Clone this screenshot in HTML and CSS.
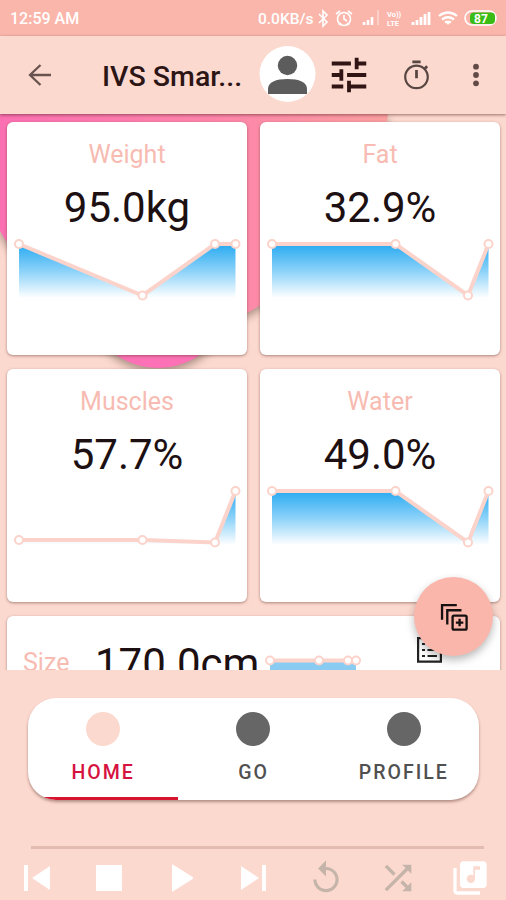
FILE: index.html
```html
<!DOCTYPE html>
<html lang="en">
<head>
<meta charset="utf-8">
<title>IVS Smart</title>
<link rel="stylesheet" href="styles.css">
</head>
<body>
<div class="app">
  <header class="status">
    <span class="clock">12:59 AM</span>
    <span class="speed">0.0KB/s</span>
    <svg class="status-icons" width="186" height="36" viewBox="0 0 186 36" fill="none" stroke="#fff" stroke-width="1.6">
      <path d="M3 14l8 8-4 4V11l4 4-8 8"/>
      <circle cx="28" cy="19" r="6.500"/><path d="M28 15v4l3 2M20 14l4-3M36 14l-4-3M23 25l2-2M33 25l-2-2"/>
      <path stroke-width="2.6" d="M48 25v-3M52 25v-5M56 25v-8"/><path stroke-width="2" opacity=".35" d="M62 25V10"/>
      <path stroke-width="2.8" d="M97 25v-3M101 25v-5M105 25v-8M109 25V14M113 25V12"/>
      <path stroke-width="2.200" d="M123 16q9-7 18 0M126 19.500q6-4.500 12 0M129 22.500q3-2 6 0"/><path d="M129.500 22h5L132 25z" fill="#fff" stroke="none"/>
      <rect x="149" y="11" width="31" height="14" rx="7"/><rect x="154" y="12.500" width="25" height="11.500" rx="4" fill="#39bd16" stroke="none"/>
      <text class="lte" x="71" y="17">Vo))</text><text class="lte" x="71" y="25.500">LTE</text>
      <text class="battery" x="158" y="22.500">87</text>
    </svg>
  </header>
  <nav class="bar">
    <svg class="back" width="24" height="24" viewBox="0 0 24 24" fill="none" stroke="#69534e" stroke-width="2.300"><path d="M23 12H2M12.500 2L2 12l10.500 10"/></svg>
    <h1 class="title">IVS Smar...</h1>
    <svg class="avatar" width="58" height="58" viewBox="0 0 58 58"><circle cx="28.500" cy="28" r="28" fill="#fff"/><circle cx="28.500" cy="19.500" r="9.700" fill="#5c5c5c"/><path d="M9 48v-5c0-7 8-10 19.500-10s19.500 3 19.500 10v5z" fill="#5c5c5c"/></svg>
    <svg class="tune" width="46" height="46" viewBox="0 0 24 24" fill="#301514"><path d="M3 17v2h6v-2H3zM3 5v2h10V5H3zm10 16v-2h8v-2h-8v-2h-2v6h2zM7 9v2H3v2h4v2h2V9H7zm14 4v-2H11v2h10zm-6-4h2V7h4V5h-4V3h-2v6z"/></svg>
    <svg class="timer" width="33" height="33" viewBox="0 0 24 24" fill="#574641"><path d="M15 1H9v2h6V1zm-4 13h2V8h-2v6zm8.030-6.610l1.420-1.420c-.43-.51-.9-.99-1.410-1.410l-1.420 1.420C16.070 4.740 14.120 4 12 4c-4.970 0-9 4.030-9 9s4.020 9 9 9 9-4.030 9-9c0-2.120-.74-4.070-1.970-5.610zM12 20.400c-4.100 0-7.400-3.300-7.400-7.400S7.900 5.600 12 5.600s7.400 3.300 7.400 7.400-3.300 7.400-7.400 7.400z"/></svg>
    <svg class="more" width="8" height="24" viewBox="0 0 8 24" fill="#624b47"><circle cx="4" cy="3.700" r="2.900"/><circle cx="4" cy="12" r="2.900"/><circle cx="4" cy="20.300" r="2.900"/></svg>
  </nav>
  <main class="content">
    <svg class="backdrop" width="506" height="556" viewBox="0 0 506 556">
      <defs>
        <linearGradient id="pink" x1="0" x2="1"><stop offset="0" stop-color="#fb70b2"/><stop offset=".6" stop-color="#fd87a9"/><stop offset="1" stop-color="#fa9fa0"/></linearGradient>
        <linearGradient id="blue" gradientUnits="userSpaceOnUse" x1="0" x2="0" y1="8" y2="62"><stop offset="0" stop-color="#29aaf1"/><stop offset=".5" stop-color="#8bd2f9"/><stop offset="1" stop-color="#fff"/></linearGradient>
      </defs>
      <g class="blobs"><circle cx="158" cy="180" r="74" fill="#fd72b6"/><path d="M0 0H388Q380 70 335 130Q300 170 247 199Q140 225 60 175Q15 145 0 117z" fill="url(#pink)"/></g>
    </svg>
    <section class="cards">
      <article class="card"><h2>Weight</h2><p>95.0kg</p>
        <svg class="chart" width="240" height="70" viewBox="0 0 240 70"><path class="area" d="M12 8L135.500 59.500L208 8H228.500V62H12z"/><path class="line" d="M12 8L135.500 59.500L208 8H228.500"/><g class="dots"><circle cx="12" cy="8" r="4"/><circle cx="135.500" cy="59.500" r="4"/><circle cx="208" cy="8" r="4"/><circle cx="228.500" cy="8" r="4"/></g></svg></article>
      <article class="card"><h2>Fat</h2><p>32.9%</p>
        <svg class="chart" width="240" height="70" viewBox="0 0 240 70"><path class="area" d="M12 8H135.500L208 59.500L228.500 8V62H12z"/><path class="line" d="M12 8H135.500L208 59.500L228.500 8"/><g class="dots"><circle cx="12" cy="8" r="4"/><circle cx="135.500" cy="8" r="4"/><circle cx="208" cy="59.500" r="4"/><circle cx="228.500" cy="8" r="4"/></g></svg></article>
      <article class="card"><h2>Muscles</h2><p>57.7%</p>
        <svg class="chart" width="240" height="70" viewBox="0 0 240 70"><path class="area" d="M12 57H135.500L208 59.500L228.500 8V62H12z"/><path class="line" d="M12 57H135.500L208 59.500L228.500 8"/><g class="dots"><circle cx="12" cy="57" r="4"/><circle cx="135.500" cy="57" r="4"/><circle cx="208" cy="59.500" r="4"/><circle cx="228.500" cy="8" r="4"/></g></svg></article>
      <article class="card"><h2>Water</h2><p>49.0%</p>
        <svg class="chart" width="240" height="70" viewBox="0 0 240 70"><path class="area" d="M12 8H135.500L208 59.500L228.500 8V62H12z"/><path class="line" d="M12 8H135.500L208 59.500L228.500 8"/><g class="dots"><circle cx="12" cy="8" r="4"/><circle cx="135.500" cy="8" r="4"/><circle cx="208" cy="59.500" r="4"/><circle cx="228.500" cy="8" r="4"/></g></svg></article>
      <article class="card wide"><h2>Size</h2><p>170.0cm</p>
        <svg class="mini" width="100" height="40" viewBox="0 0 100 40"><path d="M7 8H93V40H7z" fill="#8acbf2"/><path class="line" d="M7 7.500H93"/><g class="dots"><circle cx="7" cy="7.500" r="4"/><circle cx="56" cy="7.500" r="4"/><circle cx="85" cy="7.500" r="4"/><circle cx="93" cy="7.500" r="4"/></g></svg>
        <svg class="list" width="25" height="26" viewBox="0 0 25 26" fill="none" stroke="#222" stroke-width="2.200"><path d="M1.100 1.100h22.800v23.600H1.100z"/><path d="M5 7h3M10.500 7h9.500M5 13h3M10.500 13h9.500M5 19h3M10.500 19h9.500"/></svg>
      </article>
    </section>
    <button class="fab" aria-label="Add"><svg width="28" height="28" viewBox="0 0 30 30" fill="none" stroke="#171010" stroke-width="2.500"><path d="M2.200 18V2.200H18M7.800 23V7.800H23"/><rect x="13.500" y="13.500" width="15" height="15" rx="1.500"/><path d="M21 17v8M17 21h8"/></svg></button>
  </main>
  <footer class="bottom">
    <div class="tabs">
      <div class="tab active"><i></i><span>HOME</span></div>
      <div class="tab"><i></i><span>GO</span></div>
      <div class="tab"><i></i><span>PROFILE</span></div>
    </div>
    <div class="seek"></div>
    <div class="player">
      <svg width="28" height="28" viewBox="0 0 28 28"><path d="M1 1h4v26H1zM27 2v24L9 14z"/></svg>
      <svg width="26" height="26" viewBox="0 0 26 26"><path d="M0 0h26v26H0z"/></svg>
      <svg width="24" height="30" viewBox="0 0 24 30"><path d="M3 1v28L25 15z"/></svg>
      <svg width="28" height="28" viewBox="0 0 28 28"><path d="M22 1h4v26h-4zM1 2v24L19 14z"/></svg>
      <svg class="muted" width="40" height="38" viewBox="0 0 24 24"><path d="M12 5V1L7 6l5 5V7c3.310 0 6 2.690 6 6s-2.690 6-6 6-6-2.690-6-6H4c0 4.420 3.580 8 8 8s8-3.580 8-8-3.580-8-8-8z"/></svg>
      <svg class="muted" width="40" height="40" viewBox="0 0 24 24"><path d="M10.590 9.170L5.410 4 4 5.410l5.170 5.170 1.420-1.410zM14.500 4l2.040 2.040L4 18.590 5.410 20 17.960 7.460 20 9.500V4h-5.500zm.33 9.410l-1.410 1.410 3.130 3.130L14.500 20H20v-5.500l-2.040 2.040-3.130-3.130z"/></svg>
      <svg width="40" height="40" viewBox="0 0 24 24"><path d="M20 2H8c-1.100 0-2 .9-2 2v12c0 1.100.9 2 2 2h12c1.100 0 2-.9 2-2V4c0-1.100-.9-2-2-2zm-2 5h-3v5.500a2.500 2.500 0 1 1-2.500-2.500c.57 0 1.080.19 1.500.51V5h4v2zM4 6H2v14c0 1.100.9 2 2 2h14v-2H4V6z"/></svg>
    </div>
  </footer>
</div>
</body>
</html>
```
FILE: styles.css
```css
* { box-sizing: border-box; }
body { margin: 0; font-family: Roboto, sans-serif; background: #fcd9cf; }
svg { display: block; flex: none; }
h1, h2, p { margin: 0; font-weight: 400; }
.app { width: 506px; height: 900px; overflow: hidden; display: flex; flex-direction: column; }

.status { height: 36px; flex: none; background: #fbb6ab; display: flex; align-items: center; padding-left: 10px; color: #fff; font-weight: 500; white-space: nowrap; }
.clock { width: 248px; font-size: 16px; padding-top: 1px; }
.speed { width: 58px; font-size: 15.5px; padding-top: 1px; }
.lte { font-size: 7.5px; fill: #fff; stroke: none; font-weight: 700; }
.battery { font-size: 12px; fill: #fff; stroke: none; font-weight: 700; }

.bar { height: 78px; flex: none; display: flex; align-items: center; background: #fcd9cf; box-shadow: 0 1px 3px rgba(70, 25, 25, .55); position: relative; z-index: 2; }
.back { margin-left: 28px; }
.title { margin-left: 50px; width: 157px; font-size: 28.5px; font-weight: 500; color: #2c1515; white-space: nowrap; padding-top: 2px; }
.tune { margin-left: 9px; }
.timer { margin-left: 28px; }
.more { margin-left: 39px; }

.content { height: 556px; flex: none; position: relative; overflow: hidden; }
.backdrop { position: absolute; top: 0; left: 0; }
.blobs { filter: drop-shadow(0 4px 4px rgba(70, 50, 40, .45)); }
.cards { position: relative; display: grid; grid-template-columns: 240px 240px; grid-auto-rows: 233px; gap: 14px 13px; padding: 8px 7px; }
.card { background: #fff; border-radius: 6px; box-shadow: 0 1px 3px rgba(90, 50, 40, .5); text-align: center; }
.card h2 { color: #f7bbb2; font-size: 25px; line-height: 30px; padding-top: 18px; }
.card p { color: #1d1012; font-size: 42px; line-height: 50px; margin-top: 13px; }
.chart { margin-top: 3px; }
.area { fill: url(#blue); }
.line { fill: none; stroke: #fbd3ca; stroke-width: 4; }
.dots { fill: #fff; stroke: #fbd3ca; stroke-width: 2; }
.wide { grid-column: span 2; display: flex; align-items: flex-start; padding-left: 16px; }
.wide h2 { width: 72px; text-align: left; padding-top: 32px; }
.wide p { width: 168px; text-align: left; margin-top: 23px; white-space: nowrap; }
.mini { margin-top: 37px; }
.list { margin: 21px 0 0 54px; }
.fab { position: absolute; left: 414px; top: 463px; width: 79px; height: 79px; border: 0; border-radius: 50%; background: #fbb6ab; display: flex; align-items: center; justify-content: center; box-shadow: 0 4px 8px rgba(0, 0, 0, .28); }

.bottom { flex: 1; background: #fcd9cf; }
.tabs { margin: 28px 27px 0 28px; height: 102px; display: flex; background: #fff; border-radius: 28px; overflow: hidden; box-shadow: 0 2px 3px rgba(90, 50, 40, .45); }
.tab { flex: 1; display: flex; flex-direction: column; align-items: center; padding-top: 14px; color: #505050; border-bottom: 3px solid transparent; }
.tab i { width: 34px; height: 34px; border-radius: 50%; background: #666; }
.tab span { margin-top: 15px; font-size: 19.5px; line-height: 24px; font-weight: 500; letter-spacing: 2px; }
.active { color: #d6123f; border-color: #d8152f; }
.active i { background: #fcd9cf; }
.seek { margin: 46px 22px 0 31px; height: 3px; background: #e2bbb1; }
.player { height: 50px; margin: 4px 0 0 1px; display: grid; grid-template-columns: repeat(7, 72.2px); align-items: center; justify-items: center; fill: #fff; }
.muted { fill: #c4b4a9; }
```
